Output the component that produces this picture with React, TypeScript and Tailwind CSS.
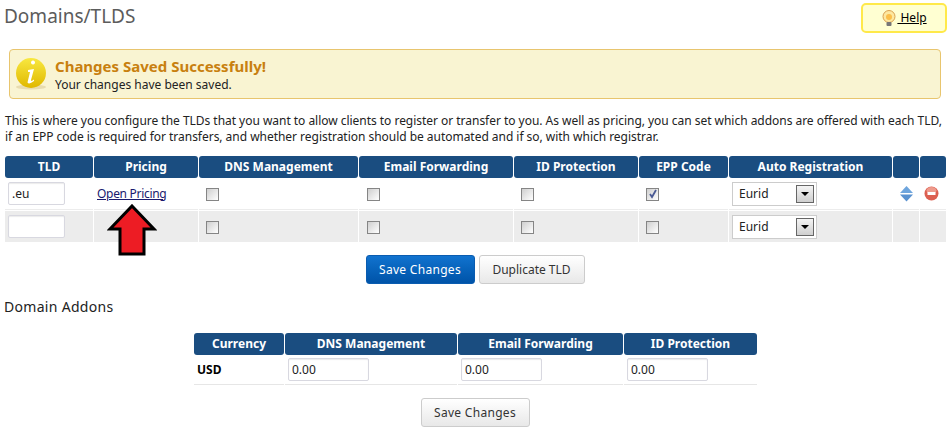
const F = "font-['Noto_Sans',sans-serif]";

function Check({ on }: { on?: boolean }) {
  return (
    <span className="inline-flex w-[13px] h-[13px] border border-[#858585] bg-gradient-to-br from-[#cfcfcf] to-white align-middle items-center justify-center">
      {on && (
        <svg width="10" height="10" viewBox="0 0 10 10">
          <path d="M2 5 L4 8 L8 1" fill="none" stroke="#4a5a94" strokeWidth="1.8" />
        </svg>
      )}
    </span>
  );
}

function Sel() {
  return (
    <span className="inline-flex w-[85px] h-[24px] border border-[#ccc] bg-white items-center pl-[6px] pr-[2px] justify-between text-[12px] text-[#222] align-middle">
      Eurid
      <span className="w-[18px] h-[18px] border border-[#666] bg-gradient-to-b from-[#f4f4f4] to-[#cfcfcf] flex items-center justify-center">
        <span className="w-0 h-0 border-x-[4px] border-x-transparent border-t-[4px] border-t-black" />
      </span>
    </span>
  );
}

function Th({ children, w }: { children?: React.ReactNode; w: string }) {
  return <th className={`${w} h-[22px] p-0 bg-[#1a4d80] text-white text-[12px] font-bold rounded-[3px] text-center`}>{children}</th>;
}

function Field({ value, w }: { value?: string; w: string }) {
  return <input readOnly value={value ?? ""} className={`${w} h-[23px] align-middle border border-[#d8d8e0] rounded-[2px] bg-white px-[3px] text-[12px] text-[#222] shadow-[inset_0_1px_1px_rgba(0,0,0,0.08)]`} />;
}

function Row({ alt, tld, pricing, checks, icons }: { alt?: boolean; tld?: string; pricing?: boolean; checks: boolean[]; icons?: boolean }) {
  const td = `p-0 h-[32px] ${alt ? "bg-[#ececec] border-t border-white" : "bg-white border-b border-[#ececec]"}`;
  return (
    <tr>
      <td className={`${td} pl-[3px]`}><Field value={tld} w="w-[57px]" /></td>
      <td className={`${td} pl-[3px]`}>{pricing && <a className="text-[12px] tracking-[-0.3px] text-[#1a1a6e] underline">Open Pricing</a>}</td>
      {checks.map((c, i) => (
        <td key={i} className={`${td} ${i === 1 ? "pl-[8px]" : "pl-[7px]"}`}><Check on={c} /></td>
      ))}
      <td className={`${td} pl-[3px]`}><Sel /></td>
      <td className={`${td} pl-[7px]`}>
        {icons && (
          <svg width="13" height="16" viewBox="0 0 13 16" className="block">
            <path d="M6.5 0 L13 7 H0 Z" fill="#6ea5dd" />
            <path d="M0 8.5 H13 L6.5 15.5 Z" fill="#5a92d0" />
          </svg>
        )}
      </td>
      <td className={`${td} pl-[4px]`}>
        {icons && (
          <svg width="15" height="15" viewBox="0 0 15 15" className="block">
            <circle cx="7.5" cy="7.5" r="7" fill="#dc5f50" />
            <ellipse cx="7.5" cy="4.5" rx="5" ry="3.5" fill="#ee9a8c" />
            <rect x="3.5" y="6" width="8" height="3" fill="#fff" />
          </svg>
        )}
      </td>
    </tr>
  );
}

export default function App() {
  return (
    <div className={`${F} relative w-[950px] h-[440px] bg-white overflow-hidden text-[12px] text-[#222]`}>
      <div className="flex justify-between items-start pl-[4px] pr-[3px] pt-[3px] h-[49px]">
        <h1 className="text-[19px] leading-[27px] text-[#5c5c5c]">Domains/TLDS</h1>
        <div className="w-[86px] h-[30px] border-2 border-[#ffe94a] rounded-[5px] bg-[#ffffd2] flex items-center justify-center gap-0 text-black">
          <svg width="16" height="17" viewBox="0 0 16 17">
            <circle cx="8" cy="6.5" r="6" fill="#fde8a0" stroke="#d9a050" />
            <circle cx="8" cy="7" r="3" fill="#fbbf4a" />
            <rect x="5.5" y="12" width="5" height="4" rx="1" fill="#777" />
          </svg>
          <span className="underline">&nbsp;Help</span>
        </div>
      </div>

      <div className="mx-[9px] h-[50px] border border-[#e8c56e] rounded-[4px] bg-[#f9f4d2] flex items-center pl-[6px] gap-[8px]">
        <svg width="31" height="34" viewBox="0 0 31 34">
          <defs>
            <linearGradient id="y" x1="0" y1="0" x2="0" y2="1">
              <stop offset="0" stopColor="#f8e840" />
              <stop offset="1" stopColor="#e0b800" />
            </linearGradient>
          </defs>
          <ellipse cx="15" cy="30" rx="15" ry="2.5" fill="#e8dcb0" />
          <circle cx="15" cy="16" r="15" fill="url(#y)" />
          <path d="M17 7.5 a2 2 0 1 1 0.01 0 M12 13 L18 12 L15 23 Q15 25 18 22.5 L18 24 Q13 28 11.5 25.5 L14 15 L12 15 Z" fill="#fff" />
        </svg>
        <div className="flex flex-col gap-[1px]">
          <div className="text-[15px] leading-[20px] font-bold text-[#c8800f]">Changes Saved Successfully!</div>
          <div className="leading-[16px] text-[#222]">Your changes have been saved.</div>
        </div>
      </div>

      <p className="mx-[5px] mt-[14px] leading-[16px] tracking-[-0.03px] text-[#222] h-[43px]">
        This is where you configure the TLDs that you want to allow clients to register or transfer to you. As well as pricing, you can set which addons are offered with each TLD, if an EPP code is required for transfers, and whether registration should be automated and if so, with which registrar.
      </p>

      <table className="ml-[4px] w-[943px] table-fixed border-separate border-spacing-x-[1px] border-spacing-y-0">
        <thead>
          <tr>
            <Th w="w-[88px]">TLD</Th>
            <Th w="w-[104px]">Pricing</Th>
            <Th w="w-[159px]">DNS Management</Th>
            <Th w="w-[154px]">Email Forwarding</Th>
            <Th w="w-[124px]">ID Protection</Th>
            <Th w="w-[89px]">EPP Code</Th>
            <Th w="w-[163px]">Auto Registration</Th>
            <Th w="w-[26px]" />
            <Th w="w-[26px]" />
          </tr>
        </thead>
        <tbody>
          <Row tld=".eu" pricing checks={[false, false, false, true]} icons />
          <Row alt checks={[false, false, false, false]} />
        </tbody>
      </table>

      <div className="flex justify-center gap-[4px] mt-[13px]">
        <button className="w-[109px] h-[29px] pt-[1px] rounded-[3px] bg-gradient-to-b from-[#1173cf] to-[#0053a8] border border-[#0a5cb0] text-white text-[12px] tracking-[0.3px]">Save Changes</button>
        <button className="w-[106px] h-[29px] pt-[1px] rounded-[3px] bg-gradient-to-b from-white to-[#e8e8e8] border border-[#ccc] text-[#333] text-[12px]">Duplicate TLD</button>
      </div>

      <h2 className="ml-[4px] mt-[13px] text-[14px] leading-[20px] tracking-[0.3px] text-[#222]">Domain Addons</h2>

      <table className="ml-[193px] mt-[16px] w-[565px] table-fixed border-separate border-spacing-x-[1px] border-spacing-y-0">
        <thead>
          <tr>
            <Th w="w-[90px]">Currency</Th>
            <Th w="w-[172px]">DNS Management</Th>
            <Th w="w-[165px]">Email Forwarding</Th>
            <Th w="w-[133px]">ID Protection</Th>
          </tr>
        </thead>
        <tbody>
          <tr>
            <td className="h-[30px] p-0 pl-[3px] font-bold text-[12px] text-black border-b border-[#e6e6e6]">USD</td>
            {[0, 1, 2].map((i) => (
              <td key={i} className="h-[30px] p-0 pl-[3px] border-b border-[#e6e6e6]"><Field value="0.00" w="w-[81px]" /></td>
            ))}
          </tr>
        </tbody>
      </table>

      <div className="flex justify-center mt-[13px]">
        <button className="w-[109px] h-[29px] pt-[1px] rounded-[3px] bg-gradient-to-b from-white to-[#e8e8e8] border border-[#ccc] text-[#333] text-[12px] tracking-[0.3px]">Save Changes</button>
      </div>

      <svg className="absolute left-[107px] top-[204px]" width="50" height="52" viewBox="0 0 50 52">
        <path d="M25 2 L47 25 H37 V50 H13 V25 H3 Z" fill="#ed1c24" stroke="#000" strokeWidth="3" strokeLinejoin="miter" />
      </svg>
    </div>
  );
}
